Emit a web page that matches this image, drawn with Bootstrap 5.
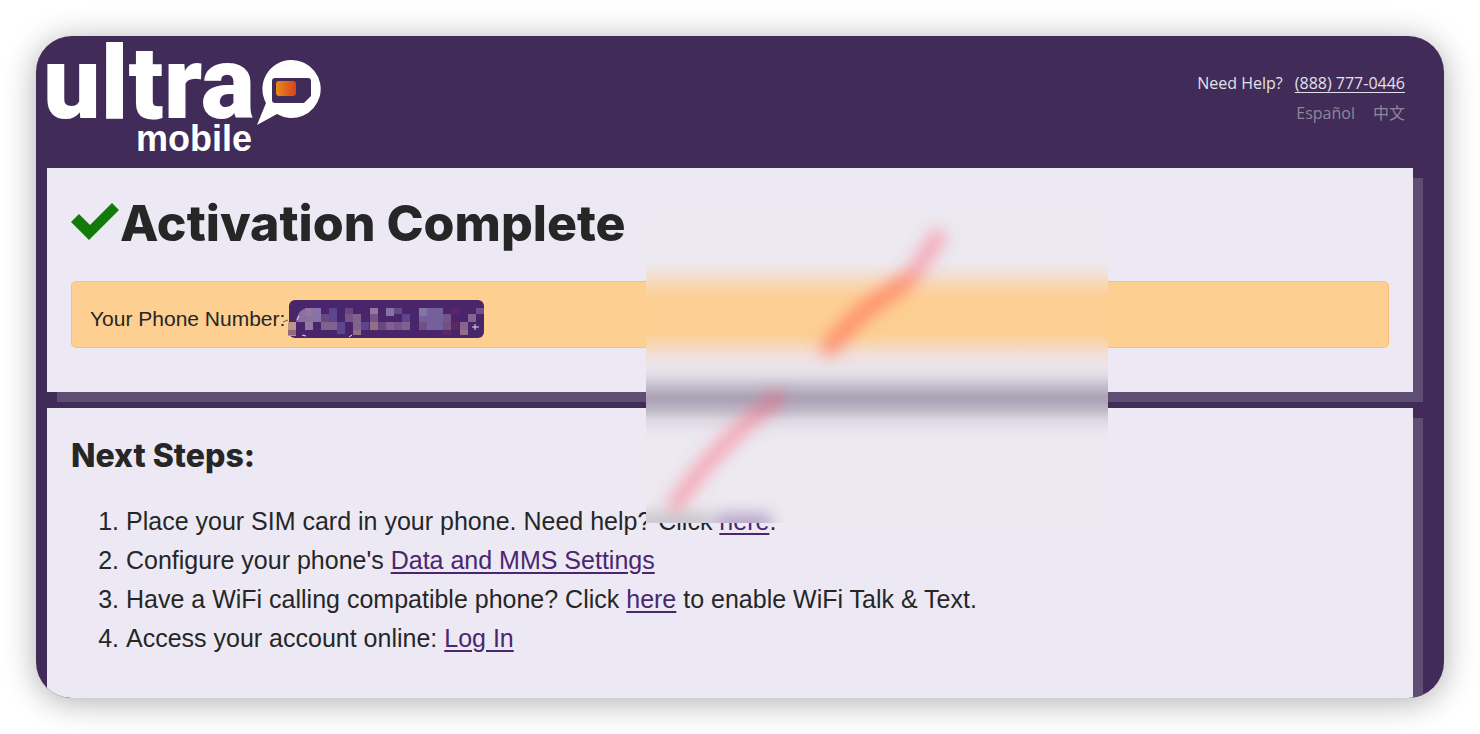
<!DOCTYPE html>
<html lang="en">
<head>
<meta charset="utf-8">
<meta name="viewport" content="width=device-width, initial-scale=1">
<title>Ultra Mobile - Activation Complete</title>
<link href="https://cdn.jsdelivr.net/npm/bootstrap@5.3.0/dist/css/bootstrap.min.css" rel="stylesheet">
<style>
  body { background: #fff; color: #262626; font-family: "Liberation Sans", Arial, sans-serif; }
  .stage { padding: 36px; }
  .window-frame { background: #412b58; border-radius: 36px; box-shadow: 0 4px 32px rgba(0, 0, 0, .32); padding: 0 31px 0 11px; }
  .site-header { height: 132px; }
  .brand-logo { width: 276px; height: 128px; overflow: visible; }
  .help-links { font: 16px/30px "Open Sans", "Noto Sans CJK SC", sans-serif; color: #e4e0ea; padding: 32px 8px 0 0; }
  .help-links .phone { color: inherit; margin-left: 12px; text-underline-offset: 3px; }
  .help-links .lang { color: #8f8799; }
  .help-links .lang + .lang { margin-left: 18px; }
  .panel { background: #ece9f4; padding: 0 24px; box-shadow: 10px 10px 0 #5f4d74; }
  .panel-status { height: 224px; padding-top: 30px; }
  .panel-steps { padding-top: 28px; padding-bottom: 40px; }
  .clip { overflow: hidden; border-radius: 0 0 36px 36px; margin: 0 -31px 0 -11px; padding: 16px 31px 0 11px; }
  h1, h2 { font-family: Inter, sans-serif; font-weight: 800; margin: 0; }
  h1 { font-size: 50px; line-height: 50px; }
  h2 { font-size: 32px; line-height: 40px; }
  .notice { background: #fdcf90; border: 1px solid #fbc173; border-radius: 5px; height: 67px; margin-top: 33px; padding: 8px 17px 0 18px; font-size: 21px; color: #262626; }
  .redacted { width: 202px; height: 38px; margin-left: -2px; }
  .steps { font-size: 25px; line-height: 39px; margin: 26px 0 0; padding-left: 55px; }
  .steps a { color: #4b2670; text-underline-offset: 3px; }
  .smudge { left: 599px; top: 44px; width: 462px; height: 311px; overflow: hidden; pointer-events: none;
    background: linear-gradient(#ece9f3 0, #ece9f0 12px, #ece9f0 50px, #f2e0d5 62px, #f8d8b4 72px, #fdcf92 86px, #fdcf92 122px, #f8d6b4 132px, #f0e1dc 144px, #e9e4ea 156px, #dfdbe5 164px, #c4bfcd 174px, #aca5b8 184px, #aca5b8 189px, #c0bbc9 199px, #dcd7e2 208px, #eae6ee 220px, #ece9f0 232px); }
</style>
</head>
<body>
<div class="stage">
  <div class="window-frame">
    <header class="site-header d-flex justify-content-between">
      <svg class="brand-logo" viewBox="0 0 276 128" role="img" aria-label="Ultra Mobile">
        <defs><linearGradient id="chip"><stop offset="0" stop-color="#e58a1c"/><stop offset="1" stop-color="#d8431f"/></linearGradient></defs>
        <g fill="#fff">
          <text x="-4" y="82" font-family="Roboto, sans-serif" font-weight="900" font-size="102">ultra</text>
          <text x="89" y="115" font-family="Liberation Sans, sans-serif" font-weight="700" font-size="36">mobile</text>
          <path d="M244 24a29 29 0 1 1-14 54l-20 11 9-22a29 29 0 0 1 25-43z"/>
        </g>
        <path d="M228 42h33q3 0 3 3v15l-7 7h-29q-3 0-3-3v-19q0-3 3-3z" fill="#412b58"/>
        <rect x="229" y="45" width="20" height="15" rx="3" fill="url(#chip)"/>
      </svg>
      <div class="help-links text-end">
        <div>Need Help?<a class="phone" href="tel:8887770446">(888) 777-0446</a></div>
        <div><a class="lang text-decoration-none" href="#es">Español</a><a class="lang text-decoration-none" href="#zh" lang="zh">中文</a></div>
      </div>
    </header>
    <main class="position-relative">
      <section class="panel panel-status">
        <h1 class="d-flex"><svg width="49" height="50" viewBox="0 0 49 50" aria-hidden="true"><path d="M0 24l8-8 11 11L41 5l7 7-30 30z" fill="#117a09"/></svg>Activation Complete</h1>
        <div class="notice d-flex align-items-center"><span>Your Phone Number:</span>
          <svg class="redacted" viewBox="0 0 202 38" role="img" aria-label="Redacted number">
            <path d="M0 22l5-2" stroke="#6b5a55"/>
            <rect x="6" width="195" height="38" rx="6" fill="#49266b"/>
            <path d="M5 22h8v14H5z" fill="#bd9488"/><path d="M5 30h8v5H5z" fill="#94697c"/>
            <path d="M13 22q2-14 13-14h4v14z" fill="#8a70a0"/>
            <path d="M22 8h8v8h-8zM22 22h8v8h-8zM87 8h8v8h-8z" fill="#94779e"/>
            <path d="M30 8h8v14h-8zM103 8h8v8h-8zM136 8h8v8h-8z" fill="#8572a6"/>
            <path d="M38 14h8v8h-8zM62 8h8v6h-8zM111 8h8v6h-8zM95 22h8v8h-8z" fill="#694781"/>
            <path d="M46 8h8v14h-8zM54 22h8v12h-8zM78 22h8v8h-8zM119 14h8v8h-8z" fill="#5d4590"/>
            <path d="M38 22h16v8H38zM70 14h8v16h-8zM103 22h8v8h-8zM119 22h8v8h-8z" fill="#82628d"/>
            <path d="M62 14h8v8h-8zM87 14h8v8h-8zM160 14h8v8h-8zM111 22h8v8h-8z" fill="#79548a"/>
            <path d="M70 30h8v5h-8zM87 22h8v8h-8zM177 30h8v5h-8z" fill="#926f86"/>
            <path d="M144 8h16v22h-16zM136 16h8v6h-8z" fill="#76609b"/>
            <path d="M160 22h8v8h-8zM136 22h8v8h-8zM193 8h8v6h-8z" fill="#715087"/>
            <path d="M168 8h8v6h-8zM168 22h8v8h-8zM160 30h8v5h-8z" fill="#5b2865"/>
            <path d="M185 14h8v8h-8zM177 22h8v8h-8z" fill="#856590"/>
            <path d="M189 27h7M192 24v6M19 35l4 1M69 35l-3 2M14 20l2-4" stroke="#dedbf2" fill="none"/>
          </svg>
        </div>
      </section>
      <div class="clip">
        <section class="panel panel-steps">
          <h2>Next Steps:</h2>
          <ol class="steps">
            <li>Place your SIM card in your phone. Need help? Click <a href="#sim">here</a>.</li>
            <li>Configure your phone's <a href="#settings">Data and MMS Settings</a></li>
            <li>Have a WiFi calling compatible phone? Click <a href="#wifi">here</a> to enable WiFi Talk &amp; Text.</li>
            <li>Access your account online: <a href="#login">Log In</a></li>
          </ol>
        </section>
      </div>
      <svg class="smudge position-absolute" viewBox="0 0 462 311" aria-hidden="true">
        <defs><filter id="soft" filterUnits="userSpaceOnUse" x="-50" y="-50" width="560" height="420"><feGaussianBlur stdDeviation="8"/></filter></defs>
        <g filter="url(#soft)">
          <path d="M-15 310h80" stroke="#c0bec4" stroke-width="16"/>
          <path d="M70 312h55" stroke="#b3a2c4" stroke-width="20"/>
        </g>
        <g filter="url(#soft)" fill="none" stroke-linecap="round">
          <path d="M29 293Q52 258 83 228T132 186" stroke="#ff5c78" stroke-opacity=".5" stroke-width="15"/>
          <path d="M183 136Q205 108 230 90L262 68" stroke="#ff6550" stroke-opacity=".62" stroke-width="17"/>
          <path d="M270 58L292 25" stroke="#ff5c78" stroke-opacity=".48" stroke-width="16"/>
        </g>
      </svg>
    </main>
  </div>
</div>
<script src="https://cdn.jsdelivr.net/npm/bootstrap@5.3.0/dist/js/bootstrap.bundle.min.js"></script>
</body>
</html>
